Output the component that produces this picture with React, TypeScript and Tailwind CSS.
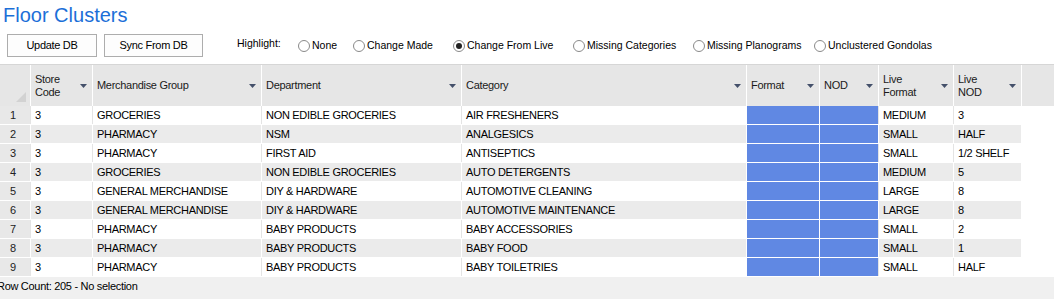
import React from 'react';

const columns = [
  { key: 'store', label: ['Store', 'Code'], width: 'w-[62px]' },
  { key: 'group', label: ['Merchandise Group'], width: 'w-[169px]' },
  { key: 'dept', label: ['Department'], width: 'w-[200px]' },
  { key: 'cat', label: ['Category'], width: 'w-[285px]' },
  { key: 'format', label: ['Format'], width: 'w-[73px]' },
  { key: 'nod', label: ['NOD'], width: 'w-[59px]' },
  { key: 'liveFormat', label: ['Live', 'Format'], width: 'w-[75px]' },
  { key: 'liveNod', label: ['Live', 'NOD'], width: 'w-[68px]' },
];

const rows = [
  ['3', 'GROCERIES', 'NON EDIBLE GROCERIES', 'AIR FRESHENERS', 'MEDIUM', '3'],
  ['3', 'PHARMACY', 'NSM', 'ANALGESICS', 'SMALL', 'HALF'],
  ['3', 'PHARMACY', 'FIRST AID', 'ANTISEPTICS', 'SMALL', '1/2 SHELF'],
  ['3', 'GROCERIES', 'NON EDIBLE GROCERIES', 'AUTO DETERGENTS', 'MEDIUM', '5'],
  ['3', 'GENERAL MERCHANDISE', 'DIY & HARDWARE', 'AUTOMOTIVE CLEANING', 'LARGE', '8'],
  ['3', 'GENERAL MERCHANDISE', 'DIY & HARDWARE', 'AUTOMOTIVE MAINTENANCE', 'LARGE', '8'],
  ['3', 'PHARMACY', 'BABY PRODUCTS', 'BABY ACCESSORIES', 'SMALL', '2'],
  ['3', 'PHARMACY', 'BABY PRODUCTS', 'BABY FOOD', 'SMALL', '1'],
  ['3', 'PHARMACY', 'BABY PRODUCTS', 'BABY TOILETRIES', 'SMALL', 'HALF'],
];

const radios = [
  { label: 'None', width: 'w-[55px]' },
  { label: 'Change Made', width: 'w-[100px]' },
  { label: 'Change From Live', width: 'w-[120px]', checked: true },
  { label: 'Missing Categories', width: 'w-[120px]' },
  { label: 'Missing Planograms', width: 'w-[121px]' },
  { label: 'Unclustered Gondolas', width: 'w-[130px]' },
];

const Arrow = () => (
  <svg width="7" height="4" viewBox="0 0 7 4" className="shrink-0">
    <polygon points="0,0 7,0 3.5,4" fill="#44506a" />
  </svg>
);

export default function App() {
  return (
    <div className="w-[1054px] h-[299px] overflow-hidden bg-white flex flex-col font-['Liberation_Sans',Arial,sans-serif] text-black">
      {/* title */}
      <div className="h-[34px] pl-[3px] pt-[2px] text-[20px] leading-[26px] text-[#1c6fd8]">Floor Clusters</div>

      {/* toolbar */}
      <div className="h-[23px] flex items-center text-[11px] tracking-[-0.3px]">
        <button className="ml-[7px] w-[90px] h-[23px] border border-[#adadad] bg-[#fdfdfd]">Update DB</button>
        <button className="ml-[7px] w-[99px] h-[23px] border border-[#adadad] bg-[#fdfdfd]">Sync From DB</button>
        <span className="ml-[34px] w-[61px] text-[10.5px] tracking-normal -mt-[3px]">Highlight:</span>
        {radios.map((r) => (
          <div key={r.label} className={`${r.width} flex items-center gap-[2px] text-[10.5px] tracking-normal`}>
            <span className="w-[12px] h-[12px] rounded-full border border-[#8a8a8a] bg-white flex items-center justify-center shrink-0">
              {r.checked && <span className="w-[6px] h-[6px] rounded-full bg-[#222]" />}
            </span>
            <span className="whitespace-nowrap">{r.label}</span>
          </div>
        ))}
      </div>

      {/* grid */}
      <div className="mt-[7px] text-[11px] tracking-[-0.3px]">
        <div className="h-[42px] flex border-t border-[#d6d6d6] bg-[#e6e6e6]">
          <div className="w-[30px] relative shrink-0">
            <div className="absolute right-[4px] bottom-[4px] w-0 h-0 border-l-[10px] border-l-transparent border-b-[10px] border-b-[#d2d2d2]" />
          </div>
          {columns.map((c) => (
            <div key={c.key} className={`${c.width} shrink-0 border-l border-white flex items-center justify-between pl-[4px] pr-[5px] text-[#1a1a1a]`}>
              <div className="leading-[13px]">
                {c.label.map((l) => (
                  <div key={l} className="whitespace-nowrap">{l}</div>
                ))}
              </div>
              <Arrow />
            </div>
          ))}
          <div className="flex-1 border-l border-white" />
        </div>

        {rows.map((r, i) => {
          const alt = i % 2 === 1;
          const bg = alt ? 'bg-[#ebebeb] border-white' : 'bg-white border-[#e4e4e4]';
          return (
            <div key={i} className="h-[19px] flex border-b border-white">
              <div className="w-[30px] shrink-0 bg-[#e8e8e8] pl-[10px] leading-[18px] text-[#222]">{i + 1}</div>
              <div className={`w-[62px] shrink-0 border-l ${bg} pl-[4px] leading-[18px]`}>{r[0]}</div>
              <div className={`w-[169px] shrink-0 border-l ${bg} pl-[4px] leading-[18px] whitespace-nowrap`}>{r[1]}</div>
              <div className={`w-[200px] shrink-0 border-l ${bg} pl-[4px] leading-[18px] whitespace-nowrap`}>{r[2]}</div>
              <div className={`w-[285px] shrink-0 border-l ${bg} pl-[4px] leading-[18px] whitespace-nowrap`}>{r[3]}</div>
              <div className="w-[73px] shrink-0 border-l border-white bg-[#6088e3]" />
              <div className="w-[59px] shrink-0 border-l border-white bg-[#6088e3]" />
              <div className={`w-[75px] shrink-0 border-l ${bg} pl-[4px] leading-[18px]`}>{r[4]}</div>
              <div className={`w-[68px] shrink-0 border-l ${bg} pl-[4px] leading-[18px] whitespace-nowrap`}>{r[5]}</div>
              <div className="flex-1 border-l border-white bg-white" />
            </div>
          );
        })}
      </div>

      {/* status */}
      <div className="flex-1 bg-[#f0f0f0] text-[11px] tracking-[-0.3px] -ml-[3px] pt-[2px] leading-[14px]">Row Count: 205 - No selection</div>
    </div>
  );
}
